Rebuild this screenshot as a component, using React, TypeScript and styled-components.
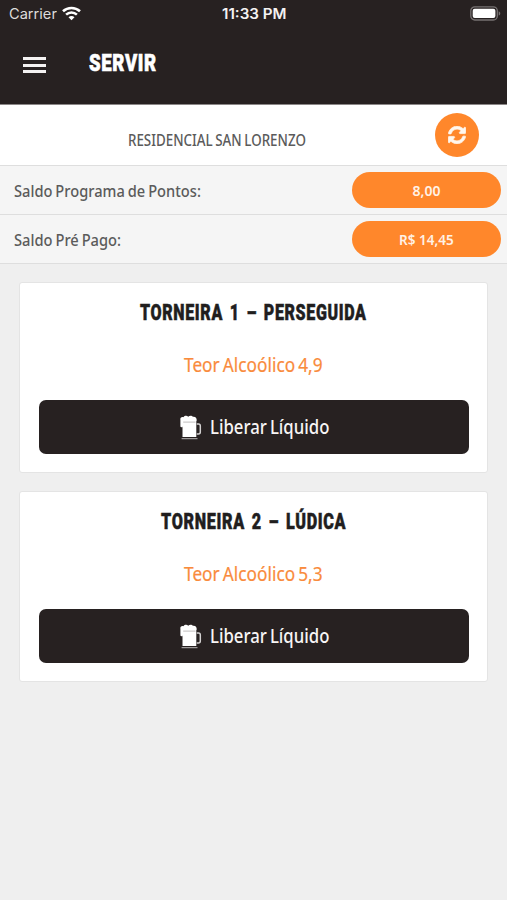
import React, { useLayoutEffect, useRef, useState } from "react";
import styled, { createGlobalStyle } from "styled-components";

const DARK = "#272121";
const ORANGE = "#ff872b";

const GlobalStyle = createGlobalStyle`
  * { box-sizing: border-box; }
  body { margin: 0; background: #efefef; font-family: "Noto Sans", "Open Sans", sans-serif; }
`;

const Screen = styled.div`
  width: 100%;
  max-width: 507px;
  min-height: 900px;
  overflow: hidden;
  background: #efefef;
`;

const Header = styled.header`
  height: 105px;
  background: ${DARK};
  border-bottom: 1px solid #8b8787;
  color: #fff;
`;

const StatusBar = styled.div`
  display: grid;
  grid-template-columns: 1fr auto 1fr;
  align-items: center;
  height: 28px;
  padding: 0 6px 0 9px;
  font-family: Inter, sans-serif;
  color: #f4f2f2;
`;

const Carrier = styled.div`
  display: flex;
  align-items: center;
  gap: 5px;
  font-size: 14px;
  line-height: 28px;
  color: #dedcdc;
  svg { margin-top: -2px; }
`;

const Clock = styled.div`
  margin-right: 2px;
  font-size: 14px;
  font-weight: 600;
  line-height: 28px;
`;

const BatterySlot = styled.div`
  display: flex;
  justify-content: flex-end;
  margin-top: -2px;
`;

const NavBar = styled.div`
  display: flex;
  align-items: flex-start;
  padding: 21px 23px 0;
`;

const MenuButton = styled.button`
  display: flex;
  flex-direction: column;
  justify-content: space-between;
  width: 23px;
  height: 16px;
  margin: 8px 43px 0 0;
  padding: 0;
  border: 0;
  background: none;
`;

const MenuBar = styled.span`
  height: 3px;
  background: #f4f2f2;
`;

const ScreenTitle = styled.h1`
  margin: 0;
  font: 900 23.5px/28px Roboto, sans-serif;
  letter-spacing: 0.8px;
  -webkit-text-stroke: 0.6px #fff;
`;

const LocationRow = styled.section`
  display: flex;
  align-items: center;
  justify-content: space-between;
  height: 61px;
  padding: 0 28px 0 128px;
  background: #fff;
  border-bottom: 1px solid #dedede;
`;

const LocationName = styled.div`
  margin-top: 9px;
  font-size: 16.5px;
  line-height: 22px;
  font-weight: 500;
  word-spacing: -1px;
  color: #5b5b5b;
`;

const RefreshButton = styled.button`
  display: grid;
  place-items: center;
  width: 44px;
  height: 44px;
  padding: 0;
  border: 0;
  border-radius: 50%;
  background: ${ORANGE};
`;

const BalanceRow = styled.section`
  display: flex;
  align-items: center;
  justify-content: space-between;
  height: 49px;
  padding: 0 6px 0 14px;
  background: #f5f5f5;
  border-bottom: 1px solid #dedede;
`;

const BalanceLabel = styled.div`
  margin-top: 2px;
  font-size: 17px;
  line-height: 24px;
  font-weight: 500;
  word-spacing: -1px;
  color: #5b5b5b;
`;

const BalancePill = styled.div`
  display: grid;
  place-items: center;
  width: 149px;
  height: 36px;
  margin-top: -1px;
  padding-top: 2px;
  border-radius: 18px;
  background: ${ORANGE};
  color: #fff2e6;
  font-size: 14px;
  font-weight: 600;
  line-height: 20px;
`;

const Taps = styled.main`
  display: flex;
  flex-direction: column;
  gap: 18px;
  padding: 18px 19px;
`;

const TapCard = styled.article`
  display: flex;
  flex-direction: column;
  align-items: center;
  height: 191px;
  padding: 15px 18px 0;
  border: 1px solid #e4e4e4;
  border-radius: 3px;
  background: #fff;
`;

const TapName = styled.h2`
  margin: 0;
  font: 900 22.3px/28px Roboto, sans-serif;
  letter-spacing: 0.9px;
  word-spacing: 3px;
  color: #211e1e;
  -webkit-text-stroke: 0.5px #211e1e;
`;

const Alcohol = styled.div`
  margin-top: 26px;
  font-size: 19px;
  line-height: 26px;
  word-spacing: -1.5px;
  color: #f98b3c;
  -webkit-text-stroke: 0.2px #f98b3c;
`;

const ReleaseButton = styled.button`
  display: flex;
  align-items: center;
  justify-content: center;
  gap: 8px;
  width: 430px;
  height: 54px;
  margin-top: 22px;
  padding: 0;
  border: 0;
  border-radius: 7px;
  background: ${DARK};
  color: #f7f5f5;
  font-family: inherit;
  font-size: 19px;
  font-weight: 500;
  line-height: 26px;
  word-spacing: -1.5px;
`;

const FitBox = styled.span<{ $width: number }>`
  display: block;
  width: ${(p) => p.$width}px;
  text-align: left;
  white-space: nowrap;
`;

const FitInner = styled.span`
  display: inline-block;
  transform-origin: left center;
`;

/* Condenses a line of text horizontally to the given width. */
function Fit({ width, children }: { width: number; children: string }) {
  const ref = useRef<HTMLSpanElement>(null);
  const [scale, setScale] = useState(1);
  useLayoutEffect(() => {
    if (ref.current) setScale(width / ref.current.offsetWidth);
  }, [width, children]);
  return (
    <FitBox $width={width}>
      <FitInner ref={ref} style={{ transform: `scaleX(${scale})` }}>{children}</FitInner>
    </FitBox>
  );
}

const WifiIcon = () => (
  <svg width="19" height="15" viewBox="0 0 19 15" fill="none" stroke="#fff" strokeWidth="2.6">
    <path d="M1 5.3C5.8.8 13.2.8 18 5.3" />
    <path d="M4.1 8.6C7.2 5.7 11.8 5.7 14.9 8.6" />
    <path d="M9.5 14.2 6.5 11.2C8.2 9.6 10.8 9.6 12.5 11.2Z" fill="#fff" stroke="none" />
  </svg>
);

const BatteryIcon = () => (
  <svg width="31" height="15" viewBox="0 0 31 15">
    <rect x="0.8" y="0.8" width="26.5" height="13.2" rx="4" fill="none" stroke="#777272" strokeWidth="1.3" />
    <rect x="2.7" y="2.7" width="22.7" height="9.4" rx="2" fill="#fff" />
    <path d="M28.7 5.2C30.8 6 30.8 8.8 28.7 9.6Z" fill="#777272" />
  </svg>
);

const RefreshIcon = () => (
  <svg width="18" height="18" viewBox="0 0 512 512" fill="#fff7ee" stroke="#fff7ee" strokeWidth="22">
    <path d="M370.7 133.3C339.5 104 298.9 88 255.8 88c-77.5.1-144.3 53.2-162.8 126.9-1.3 5.4-6.1 9.1-11.7 9.1H24.1c-7.5 0-13.2-6.8-11.8-14.2C33.9 94.9 134.8 8 256 8c66.4 0 126.8 26.1 171.3 68.7L463 41c15.1-15.1 41-4.4 41 17v134c0 13.3-10.7 24-24 24H346c-21.4 0-32.1-25.9-17-41l41.7-41.7zM32 296h134c21.4 0 32.1 25.9 17 41l-41.8 41.8C172.5 408 213.1 424 256.2 424c77.4-.1 144.3-53.2 162.8-126.9 1.3-5.4 6.1-9.1 11.7-9.1h57.3c7.5 0 13.2 6.8 11.8 14.2C478.1 417.1 377.2 504 256 504c-66.4 0-126.8-26.1-171.3-68.7L49 471c-15.1 15.1-41 4.4-41-17V320c0-13.3 10.7-24 24-24z" />
  </svg>
);

const BeerIcon = () => (
  <svg width="23" height="25" viewBox="0 0 23 25">
    <path d="M1.4 11.5V5.2C.8 3 2.6 1.6 4.5 2.2 5.6.5 8 .5 9.2 1.7 10.5.4 13 .4 13.8 1.8 16 1.2 18 2.7 17.7 5.5L17 7H4.7L3.9 11.4C3.6 12.6 1.6 12.6 1.4 11.5Z" fill="#fff" />
    <path d="M3.5 6.5H17.3V22H3.5Z" fill="#fff" />
    <path d="M17.7 9.1H19.5Q21.3 9.1 21.3 11V17Q21.3 19 19.5 19H17.7" fill="none" stroke="#d2d0d0" strokeWidth="1.5" />
    <path d="M4.2 7.1H16.5" stroke="#a5a1a1" strokeWidth="0.7" />
    <path d="M2.6 23.7H18.5" stroke="#bab7b7" strokeWidth="1" />
  </svg>
);

const balances = [
  { label: "Saldo Programa de Pontos:", labelWidth: 187, value: "8,00", valueWidth: 28 },
  { label: "Saldo Pré Pago:", labelWidth: 107, value: "R$ 14,45", valueWidth: 55 },
];

const taps = [
  { name: "TORNEIRA 1 – PERSEGUIDA", width: 227, alcohol: "Teor Alcoólico 4,9" },
  { name: "TORNEIRA 2 – LÚDICA", width: 185, alcohol: "Teor Alcoólico 5,3" },
];

export default function App() {
  return (
    <Screen>
      <GlobalStyle />
      <Header>
        <StatusBar>
          <Carrier><Fit width={48}>Carrier</Fit><WifiIcon /></Carrier>
          <Clock><Fit width={65}>11:33 PM</Fit></Clock>
          <BatterySlot><BatteryIcon /></BatterySlot>
        </StatusBar>
        <NavBar>
          <MenuButton aria-label="Menu"><MenuBar /><MenuBar /><MenuBar /></MenuButton>
          <ScreenTitle><Fit width={68}>SERVIR</Fit></ScreenTitle>
        </NavBar>
      </Header>
      <LocationRow>
        <LocationName><Fit width={178}>RESIDENCIAL SAN LORENZO</Fit></LocationName>
        <RefreshButton aria-label="Atualizar"><RefreshIcon /></RefreshButton>
      </LocationRow>
      {balances.map((b) => (
        <BalanceRow key={b.label}>
          <BalanceLabel><Fit width={b.labelWidth}>{b.label}</Fit></BalanceLabel>
          <BalancePill><Fit width={b.valueWidth}>{b.value}</Fit></BalancePill>
        </BalanceRow>
      ))}
      <Taps>
        {taps.map((t) => (
          <TapCard key={t.name}>
            <TapName><Fit width={t.width}>{t.name}</Fit></TapName>
            <Alcohol><Fit width={139}>{t.alcohol}</Fit></Alcohol>
            <ReleaseButton><BeerIcon /><Fit width={119}>Liberar Líquido</Fit></ReleaseButton>
          </TapCard>
        ))}
      </Taps>
    </Screen>
  );
}
